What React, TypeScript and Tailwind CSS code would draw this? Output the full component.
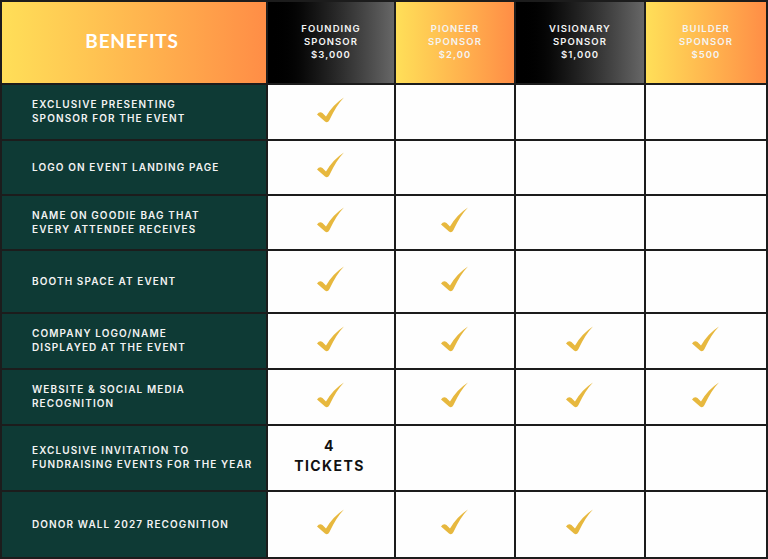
const rows: { label: string[]; cells: (boolean | string)[]; h: string }[] = [
  { label: ['Exclusive presenting', 'sponsor for the event'], cells: [true, false, false, false], h: 'h-[54px]' },
  { label: ['Logo on event landing page'], cells: [true, false, false, false], h: 'h-[53px]' },
  { label: ['Name on goodie bag that', 'every attendee receives'], cells: [true, true, false, false], h: 'h-[53px]' },
  { label: ['Booth space at event'], cells: [true, true, false, false], h: 'h-[61px]' },
  { label: ['Company logo/name', 'displayed at the event'], cells: [true, true, true, true], h: 'h-[54px]' },
  { label: ['Website & social media', 'recognition'], cells: [true, true, true, true], h: 'h-[54px]' },
  { label: ['Exclusive invitation to', 'fundraising events for the year'], cells: ['4 tickets', false, false, false], h: 'h-[64px]' },
  { label: ['Donor wall 2027 recognition'], cells: [true, true, true, false], h: 'h-[65px]' },
];

const tiers = [
  { name: 'Founding', price: '$3,000', dark: true },
  { name: 'Pioneer', price: '$2,00', dark: false },
  { name: 'Visionary', price: '$1,000', dark: true },
  { name: 'Builder', price: '$500', dark: false },
];

function Check() {
  return (
    <svg width="28" height="26" viewBox="0 0 28 26" className="block">
      <path
        d="M1 17.5 Q3.5 14 6.5 16 L10 19.5 Q17 7.5 28 0.5 Q20.5 8 13.5 23 Q11.5 26.5 9 24.5 Z"
        fill="#e7b83e"
      />
    </svg>
  );
}

export default function App() {
  const font = { fontFamily: 'Inter, "Open Sans", sans-serif' };
  return (
    <div className="w-[768px] h-[559px] bg-[#1c1c1c] p-[2px] overflow-hidden" style={font}>
      <div className="grid grid-cols-[264px_126px_118px_128px_120px] gap-[2px]">
        <div className="h-[81px] flex items-center justify-center bg-gradient-to-r from-[#ffdf58] to-[#ff8d46] pb-[2px]">
          <span className="text-white text-[19px] font-bold tracking-[0.04em] pr-[4px]" style={{ fontFamily: 'Lato, sans-serif' }}>
            BENEFITS
          </span>
        </div>
        {tiers.map((t) => (
          <div
            key={t.name}
            className={`h-[81px] flex flex-col items-center justify-center pb-[2px] text-[#f4f4f4] text-[9.5px] font-semibold tracking-[0.11em] leading-[13px] uppercase ${
              t.dark ? 'bg-gradient-to-r from-[#000000] to-[#676767]' : 'bg-gradient-to-r from-[#ffdf58] to-[#ff8d46]'
            }`}
          >
            <span>{t.name}</span>
            <span>Sponsor</span>
            <span>{t.price}</span>
          </div>
        ))}
        {rows.map((r, i) => (
          <div key={i} className="contents">
            <div className={`${r.h} bg-[#0e3a35] flex flex-col justify-center pl-[30px] pb-[2px] text-[#f3f3f3] text-[10px] font-semibold tracking-[0.11em] leading-[14px] uppercase`}>
              {r.label.map((l) => (
                <span key={l}>{l}</span>
              ))}
            </div>
            {r.cells.map((c, j) => (
              <div key={j} className={`${r.h} bg-[#fefefe] flex items-center justify-center pb-[5px] pr-[3px]`}>
                {c === true && <Check />}
                {typeof c === 'string' && (
                  <div className="flex flex-col items-center text-[#111] text-[14px] font-bold tracking-[0.1em] leading-[20px] uppercase">
                    <span>4</span>
                    <span>Tickets</span>
                  </div>
                )}
              </div>
            ))}
          </div>
        ))}
      </div>
    </div>
  );
}
